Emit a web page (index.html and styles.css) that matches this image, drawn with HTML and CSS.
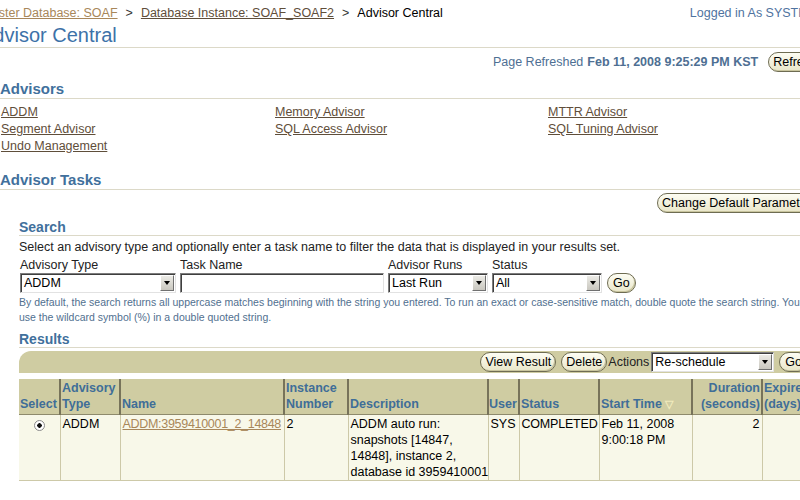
FILE: index.html
```html
<!DOCTYPE html>
<html lang="en">
<head>
    <meta charset="UTF-8">
    <title>Advisor Central</title>
    <link rel="stylesheet" href="styles.css">
</head>
<body>
<div class="page">
    <!-- Global header -->
    <div class="topbar">
        <div class="crumbs">
            <a href="#" class="visited">Cluster Database: SOAF</a><span class="sep">&gt;</span><a href="#">Database Instance: SOAF_SOAF2</a><span class="sep">&gt;</span>Advisor Central
        </div>
        <div class="login">Logged in As SYSTEM</div>
    </div>
    <h1 class="title">Advisor Central</h1>

    <div class="refresh-row">
        <span>Page Refreshed</span>
        <b>Feb 11, 2008 9:25:29 PM KST</b>
        <button class="btn">Refresh</button>
    </div>

    <!-- Advisors -->
    <h2 class="section">Advisors</h2>
    <div class="advisor-links">
        <a href="#">ADDM</a>
        <a href="#">Memory Advisor</a>
        <a href="#">MTTR Advisor</a>
        <a href="#">Segment Advisor</a>
        <a href="#">SQL Access Advisor</a>
        <a href="#">SQL Tuning Advisor</a>
        <a href="#">Undo Management</a>
    </div>

    <!-- Advisor Tasks -->
    <h2 class="section tasks">Advisor Tasks</h2>
    <div class="task-actions">
        <button class="btn">Change Default Parameters</button>
    </div>

    <div class="inner">
        <h3 class="sub">Search</h3>
        <p class="intro">Select an advisory type and optionally enter a task name to filter the data that is displayed in your results set.</p>

        <div class="search-form">
            <div class="field">
                <label>Advisory Type</label>
                <div class="select w-type"><span class="value">ADDM</span><span class="arrow"></span></div>
            </div>
            <div class="field">
                <label>Task Name</label>
                <div class="textbox"></div>
            </div>
            <div class="field">
                <label>Advisor Runs</label>
                <div class="select w-runs"><span class="value">Last Run</span><span class="arrow"></span></div>
            </div>
            <div class="field">
                <label>Status</label>
                <div class="select w-status"><span class="value">All</span><span class="arrow"></span></div>
            </div>
            <button class="btn go">Go</button>
        </div>

        <p class="hint">By default, the search returns all uppercase matches beginning with the string you entered. To run an exact or case-sensitive match, double quote the search string. You can<br>use the wildcard symbol (%) in a double quoted string.</p>

        <h3 class="sub results-head">Results</h3>

        <div class="control-bar">
            <button class="btn">View Result</button>
            <button class="btn">Delete</button>
            <span class="actions-label">Actions</span>
            <div class="select w-actions"><span class="value">Re-schedule</span><span class="arrow"></span></div>
            <button class="btn go">Go</button>
        </div>

        <table class="results">
            <colgroup>
                <col style="width: 41px">
                <col style="width: 60px">
                <col style="width: 164px">
                <col style="width: 64px">
                <col style="width: 140px">
                <col style="width: 31px">
                <col style="width: 80px">
                <col style="width: 93px">
                <col style="width: 70px">
                <col style="width: 64px">
            </colgroup>
            <thead>
                <tr>
                    <th class="c-select">Select</th>
                    <th>Advisory Type</th>
                    <th>Name</th>
                    <th>Instance Number</th>
                    <th>Description</th>
                    <th class="c-user">User</th>
                    <th>Status</th>
                    <th>Start Time <span class="sort">&#9661;</span></th>
                    <th class="num">Duration (seconds)</th>
                    <th>Expires In (days)</th>
                </tr>
            </thead>
            <tbody>
                <tr>
                    <td class="center"><span class="radio"></span></td>
                    <td>ADDM</td>
                    <td class="nowrap"><a href="#" class="visited task-link">ADDM:3959410001_2_14848</a></td>
                    <td>2</td>
                    <td class="nowrap">ADDM auto run:<br>snapshots [14847,<br>14848], instance 2,<br>database id 3959410001</td>
                    <td>SYS</td>
                    <td class="tight">COMPLETED</td>
                    <td class="nowrap">Feb 11, 2008<br>9:00:18 PM</td>
                    <td class="num">2</td>
                    <td></td>
                </tr>
            </tbody>
        </table>
    </div>

    <div class="footer-line"></div>
</div>
</body>
</html>
```

FILE: styles.css
```css
html, body {
    overflow: hidden;
}

body {
    margin: 0;
    font-family: "Liberation Sans", Arial, sans-serif;
    font-size: 12.5px;
    color: #000;
    background: #fff;
}

.page {
    width: 822px;
}

a {
    color: #5f4e3a;
}

a.visited {
    color: #a8875a;
}

/* Header */
.topbar {
    display: flex;
    justify-content: space-between;
    margin-left: -20px;
    padding: 5px 5px 0 0;
    line-height: 16px;
}

.crumbs .sep {
    padding: 0 8px;
    color: #333;
}

.login {
    color: #4f73a0;
}

.title {
    margin: 3px 0 0 -20px;
    padding-bottom: 1px;
    font-size: 20px;
    font-weight: normal;
    line-height: 22px;
    color: #3d72a8;
    border-bottom: 1px solid #dcd9c8;
}

.refresh-row {
    display: flex;
    justify-content: flex-end;
    align-items: center;
    gap: 4px;
    margin-top: 4px;
    color: #4e6f93;
}

.refresh-row b {
    margin-right: 6px;
}

/* Buttons */
.btn {
    height: 20px;
    padding: 0 4px;
    font-family: "Liberation Sans", Arial, sans-serif;
    font-size: 12.5px;
    color: #000;
    background: linear-gradient(#fdfdf3, #e9e6c9);
    border: 1px solid #6e6c52;
    border-radius: 10px;
    box-shadow: inset -1px -1px 0 #c9c59e;
}

.btn.go {
    padding: 0 5px;
}

/* Sections */
.section {
    margin: 8px 0 0;
    font-size: 15px;
    line-height: 18px;
    color: #41709c;
    border-bottom: 1px solid #dcd9c8;
}

.section.tasks {
    margin-top: 16px;
}

.advisor-links {
    display: grid;
    grid-template-columns: 274px 273px auto;
    margin-top: 5px;
    padding-left: 1px;
    line-height: 17px;
}

.task-actions {
    display: flex;
    justify-content: flex-end;
    margin-top: 3px;
}

.inner {
    padding-left: 19px;
}

.sub {
    margin: 6px 0 0;
    font-size: 14px;
    line-height: 16px;
    color: #41709c;
    border-bottom: 1px solid #dcd9c8;
}

.intro {
    margin: 3px 0 0;
    line-height: 16px;
    color: #222;
}

/* Search form */
.search-form {
    display: flex;
    align-items: flex-end;
    gap: 4px;
    margin: 2px 0 0 1px;
}

.field {
    display: flex;
    flex-direction: column;
}

.field label {
    line-height: 16px;
    color: #222;
}

.select,
.textbox {
    display: flex;
    align-items: center;
    box-sizing: border-box;
    height: 20px;
    background: #fff;
    border: 1px solid;
    border-color: #7d7d7d #e2e2e2 #e2e2e2 #7d7d7d;
    box-shadow: inset 1px 1px 0 #3f3f3f;
}

.select .value {
    flex: 1;
    padding-left: 3px;
    white-space: nowrap;
}

.select .arrow {
    position: relative;
    width: 14px;
    height: 16px;
    margin-right: 1px;
    background: linear-gradient(#ecebe6, #c9c7bf);
    border: 1px solid;
    border-color: #fff #707070 #707070 #fff;
    box-sizing: border-box;
}

.select .arrow::after {
    content: "";
    position: absolute;
    left: 3px;
    top: 5px;
    border-left: 3.5px solid transparent;
    border-right: 3.5px solid transparent;
    border-top: 4px solid #000;
}

.w-type { width: 156px; }
.w-runs { width: 100px; }
.w-status { width: 110px; }
.w-actions { width: 123px; }
.textbox { width: 204px; }

.search-form .go {
    margin-left: 1px;
}

.hint {
    margin: 2px 0 0;
    font-size: 10.5px;
    line-height: 15px;
    color: #51708f;
    white-space: nowrap;
}

.results-head {
    margin-top: 6px;
}

/* Results table */
.control-bar {
    display: flex;
    justify-content: flex-end;
    align-items: center;
    gap: 5px;
    height: 22px;
    margin-top: 3px;
    padding-right: 14px;
    background: #cfcca2;
    border-top-left-radius: 12px;
}

.actions-label {
    margin: 0 -3px 0 -4px;
    color: #222;
}

.results {
    margin-top: 6px;
    border-collapse: collapse;
    table-layout: fixed;
    width: 807px;
}

.results th {
    padding: 1px 1px 2px;
    font-size: 12.5px;
    line-height: 16px;
    text-align: left;
    vertical-align: bottom;
    color: #3f6e98;
    background: #cfcca2;
    border-right: 2px solid #77735a;
    border-bottom: 1px solid #8e8a6c;
    overflow: hidden;
}

.results th.c-select {
    padding: 1px 0 2px 1px;
}

.results th.c-user {
    padding-left: 0;
    padding-right: 0;
}

.results td {
    padding: 1px 2px 0;
    line-height: 16px;
    vertical-align: top;
    background: #f8f8e9;
    border-right: 1px solid #cdc9a8;
    border-bottom: 1px solid #cdc9a8;
}

.results .num {
    text-align: right;
}

.results .center {
    text-align: center;
}

.results .nowrap {
    white-space: nowrap;
}

.results .tight {
    letter-spacing: -0.2px;
}

.task-link {
    letter-spacing: -0.3px;
}

.sort {
    font-size: 11px;
    color: #f1ebbd;
}

.radio {
    display: inline-block;
    width: 9px;
    height: 9px;
    margin-top: 4px;
    border: 1px solid #8a8a8a;
    border-radius: 50%;
    background: radial-gradient(circle, #111 0 2px, #fff 2.5px);
}

.footer-line {
    margin: 19px 0 0 -20px;
    border-top: 2px solid #cfcfcf;
}
```
